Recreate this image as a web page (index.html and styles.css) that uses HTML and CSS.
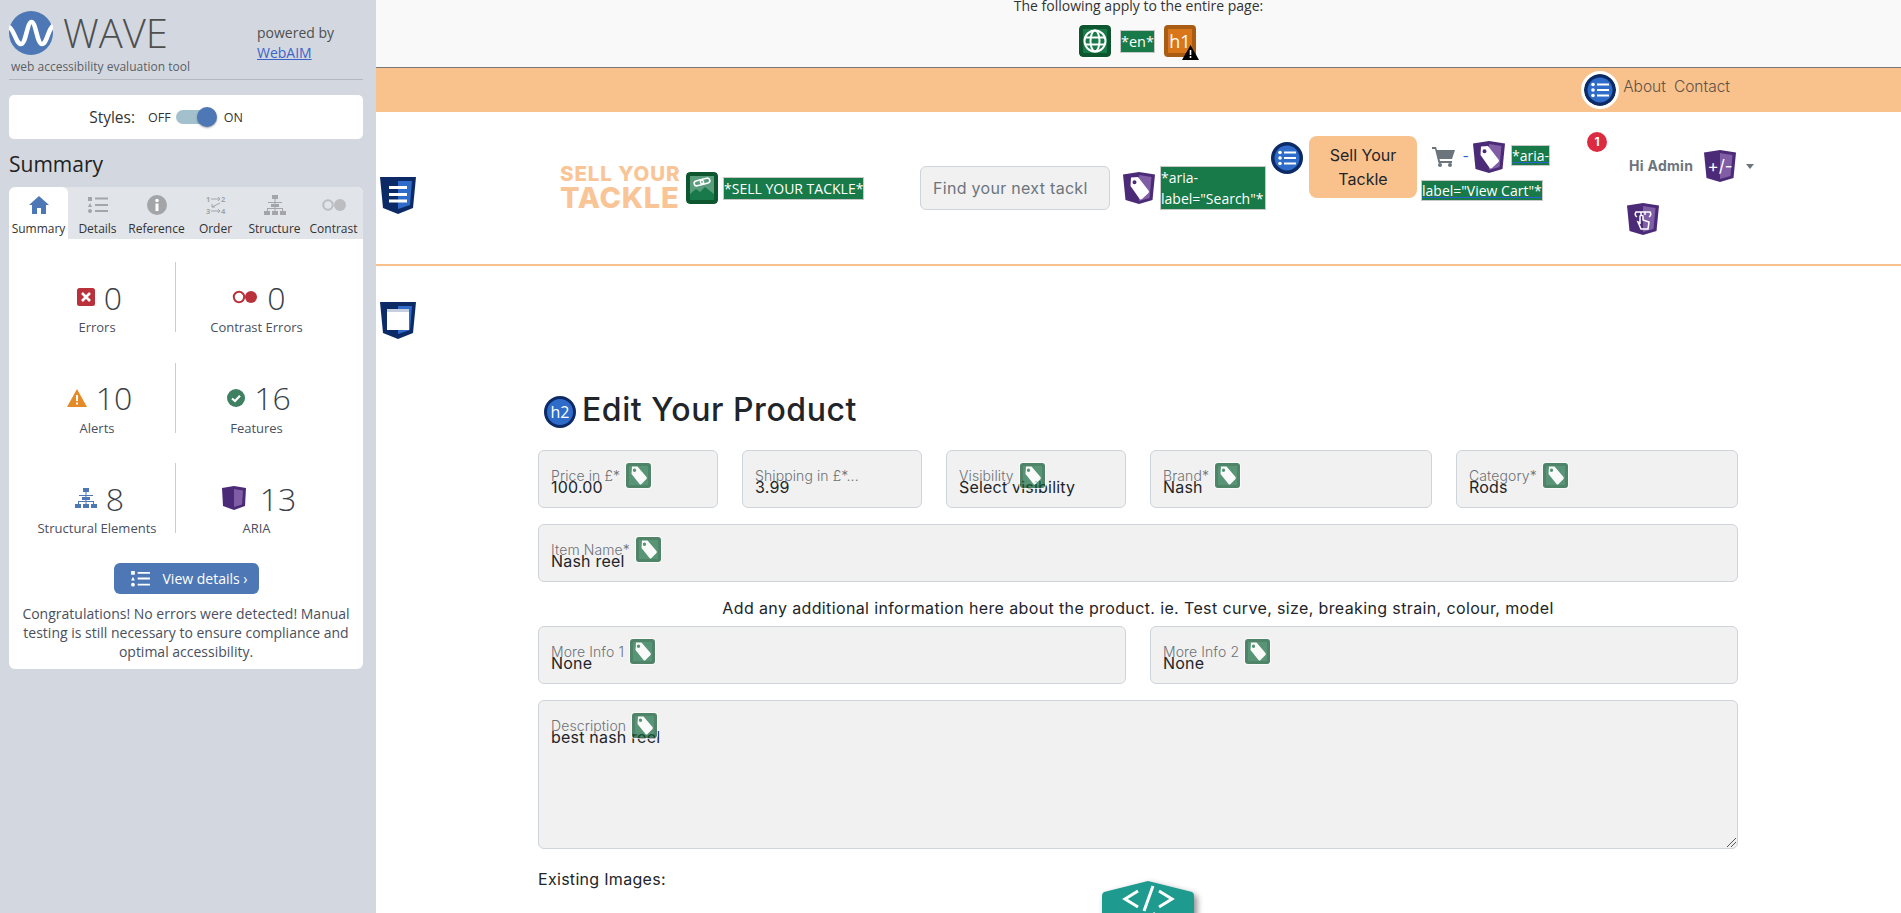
FILE: index.html
```html
<!DOCTYPE html>
<html lang="en">
	<head>
		<meta charset="UTF-8" />
		<title>Edit Your Product - WAVE</title>
		<link rel="stylesheet" href="styles.css">
	</head>
	<body>
		<svg class="defs" width="0" height="0">
			<symbol id="tag-glyph" viewBox="0 0 32 32">
				<path fill="#fff" fill-rule="evenodd" d="M8 5.500 15 5 25.500 18.500Q26.500 19.700 25.500 21L19 27Q17.600 28 16.500 26.800L7.500 14ZM11.500 8.300A2 2 0 1 0 11.500 12.300A2 2 0 1 0 11.500 8.300Z"/>
			</symbol>
			<symbol id="shield-purple" viewBox="0 0 32 32">
				<path fill="#4b2a78" d="M0 2.500 16 0 32 2.500 29.500 28 16 32 2.500 28Z"/>
				<path fill="#7f5ea6" d="M16 3 28.500 5 26.500 26 16 29Z"/>
			</symbol>
			<symbol id="shield-blue" viewBox="0 0 36 37">
				<path fill="#0b2a66" d="M0 0H36L33 31 18 37 3 31Z"/>
				<path fill="#2f6cc9" d="M18 4H32L30 28 18 32Z"/>
			</symbol>
			<symbol id="list-circle" viewBox="0 0 32 32">
				<circle cx="16" cy="16" r="16" fill="#0b2a66"/>
				<circle cx="16" cy="16" r="12.500" fill="#2f6cc9"/>
				<path fill="#fff" d="M13 9.500H25V11.500H13ZM13 15H25V17H13ZM13 20.500H25V22.500H13Z"/>
				<circle cx="9" cy="10.500" r="1.800" fill="#fff"/>
				<circle cx="9" cy="16" r="1.800" fill="#fff"/>
				<circle cx="9" cy="21.500" r="1.800" fill="#fff"/>
			</symbol>
			<symbol id="tree" viewBox="0 0 22 20">
				<path fill="currentColor" d="M8 0H14V4H11.500V7H18V8H11.500V9H15V12H11.500V13H19V16H22V20H16V16H18V14H11.500V16H14V20H8V16H10.500V14H4V16H6V20H0V16H3V13H10.500V12H7V9H10.500V8H4V7H10.500V4H8Z"/>
			</symbol>
			<symbol id="green-tag" viewBox="0 0 27 27">
				<rect width="27" height="27" rx="4" fill="#fff"/>
				<rect x="1" y="1" width="25" height="25" rx="3" fill="#0d5630"/>
				<rect x="4" y="4" width="19" height="19" fill="#166f43"/>
				<path fill="#fff" fill-rule="evenodd" d="M7 4.500 12.500 4.500 21.500 15Q22.300 16 21.500 17L16.500 22Q15.500 23 14.500 22L6.500 12ZM9.500 6.500A1.700 1.700 0 1 0 9.500 9.900A1.700 1.700 0 1 0 9.500 6.500Z"/>
			</symbol>
		</svg>

		<aside class="wave">
			<div class="wave-head">
				<div class="wave-brand">
					<div class="wave-logo">
						<svg width="44" height="44" viewBox="0 0 44 44">
							<circle cx="22" cy="22" r="22" fill="#4d78b5"/>
							<path fill="none" stroke="#fff" stroke-width="4.500" d="M0 16C5 18 7 33 12 33S18 11 22.500 11 28 33 33 33 39 18 44 15"/>
						</svg>
						<span class="wave-name">WAVE</span>
					</div>
					<div class="wave-sub">web accessibility evaluation tool</div>
				</div>
				<div class="wave-powered">powered by<br><a href="#">WebAIM</a></div>
			</div>

			<div class="styles-card">
				<span class="styles-name">Styles:</span>
				<span class="styles-opt">OFF</span>
				<span class="toggle"><span class="toggle-knob"></span></span>
				<span class="styles-opt">ON</span>
			</div>

			<h2 class="wave-title">Summary</h2>

			<div class="panel">
				<div class="tabs">
					<div class="tab tab-active">
						<svg width="20" height="18" viewBox="0 0 20 18"><path fill="#4d78b5" d="M10 0 20 9H17V18H12V12H8V18H3V9H0Z"/></svg>
						<span>Summary</span>
					</div>
					<div class="tab">
						<svg width="20" height="18" viewBox="0 0 20 18"><path fill="#a3a5a8" d="M0 1H4V5H0ZM7 1.500H20V3.500H7ZM2 7 4 11H0ZM7 8H20V10H7ZM7 14H20V16H7Z"/><circle cx="2" cy="15" r="2" fill="#a3a5a8"/></svg>
						<span>Details</span>
					</div>
					<div class="tab">
						<svg width="20" height="20" viewBox="0 0 20 20"><circle cx="10" cy="10" r="10" fill="#a3a5a8"/><path fill="#fff" d="M8.500 8.500H11.500V16H8.500Z"/><circle cx="10" cy="5.500" r="1.800" fill="#fff"/></svg>
						<span>Reference</span>
					</div>
					<div class="tab">
						<svg width="20" height="20" viewBox="0 0 20 20">
							<text class="order-num" x="0" y="7">1</text>
							<text class="order-num" x="15" y="7">2</text>
							<text class="order-num" x="0" y="19">3</text>
							<text class="order-num" x="15" y="19">4</text>
							<path fill="none" stroke="#a3a5a8" d="M5 4H14M12 2 14 4 12 6M14 8 6 12M6 9V12H9M5 16H14M12 14 14 16 12 18"/>
						</svg>
						<span>Order</span>
					</div>
					<div class="tab">
						<svg class="tab-tree" width="22" height="20"><use href="#tree"/></svg>
						<span>Structure</span>
					</div>
					<div class="tab">
						<svg width="26" height="20" viewBox="0 0 26 20"><circle cx="7" cy="10" r="4.800" fill="none" stroke="#bbbdc0" stroke-width="2"/><circle cx="19" cy="10" r="6" fill="#bbbdc0"/></svg>
						<span>Contrast</span>
					</div>
				</div>

				<div class="stats">
					<div class="stat">
						<div class="stat-num">
							<svg width="18" height="18" viewBox="0 0 18 18"><rect width="18" height="18" rx="2.500" fill="#b9313b"/><path stroke="#fff" stroke-width="2.600" d="M5 5 13 13M13 5 5 13"/></svg>
							<span>0</span>
						</div>
						<div class="stat-label">Errors</div>
					</div>
					<div class="stat stat-right">
						<div class="stat-num">
							<svg width="26" height="14" viewBox="0 0 26 14"><circle cx="7" cy="7" r="5.200" fill="none" stroke="#b9313b" stroke-width="2"/><circle cx="19" cy="7" r="6" fill="#b9313b"/></svg>
							<span>0</span>
						</div>
						<div class="stat-label">Contrast Errors</div>
					</div>
					<div class="stat">
						<div class="stat-num">
							<svg width="20" height="18" viewBox="0 0 20 18"><path fill="#e48a27" d="M10 0 20 18H0Z"/><path fill="#fff" d="M9 6H11V12H9ZM9 13.500H11V15.500H9Z"/></svg>
							<span>10</span>
						</div>
						<div class="stat-label">Alerts</div>
					</div>
					<div class="stat stat-right">
						<div class="stat-num">
							<svg width="18" height="18" viewBox="0 0 18 18"><circle cx="9" cy="9" r="9" fill="#3f7f62"/><path fill="none" stroke="#fff" stroke-width="2.200" d="M5 9.500 8 12 13 6.800"/></svg>
							<span>16</span>
						</div>
						<div class="stat-label">Features</div>
					</div>
					<div class="stat">
						<div class="stat-num">
							<svg class="stat-tree" width="22" height="20"><use href="#tree"/></svg>
							<span>8</span>
						</div>
						<div class="stat-label">Structural Elements</div>
					</div>
					<div class="stat stat-right">
						<div class="stat-num stat-aria">
							<svg width="24" height="24" viewBox="0 0 24 24"><path fill="#4b2a78" d="M0 2 12 0 24 2 23 20 12 24 1 20Z"/><path fill="#7f5ea6" d="M12 3 21 4.500 20 18.500 12 21Z"/></svg>
							<span>13</span>
						</div>
						<div class="stat-label">ARIA</div>
					</div>
				</div>

				<div class="details-wrap">
					<a class="details-btn" href="#">
						<svg width="19" height="16" viewBox="0 0 20 17"><path fill="#fff" d="M0 0H4V4H0ZM7 1H20V3H7ZM2 6 4 10H0ZM7 7H20V9H7ZM7 13.500H20V15.500H7Z"/><circle cx="2" cy="14.500" r="2" fill="#fff"/></svg>
						View details ›
					</a>
				</div>
				<p class="congrats">Congratulations! No errors were detected! Manual testing is still necessary to ensure compliance and optimal accessibility.</p>
			</div>
		</aside>

		<main class="page">
			<div class="page-info">
				<div class="page-info-text">The following apply to the entire page:</div>
				<div class="page-info-icons">
					<svg class="halo-sq" width="32" height="32" viewBox="0 0 32 32">
						<rect width="32" height="32" rx="4" fill="#0d5630"/>
						<rect x="4" y="4" width="24" height="24" fill="#177a48"/>
						<g fill="none" stroke="#fff" stroke-width="2">
							<circle cx="16" cy="16" r="10.500"/>
							<ellipse cx="16" cy="16" rx="4.500" ry="10.500"/>
							<path d="M6 12.500H26M6 19.500H26"/>
						</g>
					</svg>
					<span class="wave-text wave-lang">*en*</span>
					<div class="h1-icon">
						h1
						<svg class="h1-alert" width="17" height="15" viewBox="0 0 17 15"><path d="M8.500 0 17 15H0Z"/><path fill="#fff" d="M7.700 5H9.300V10H7.700ZM7.700 11H9.300V13H7.700Z"/></svg>
					</div>
				</div>
			</div>

			<nav class="topbar">
				<svg class="halo-round" width="32" height="32"><use href="#list-circle"/></svg>
				<a href="#">About</a>
				<a href="#">Contact</a>
			</nav>

			<header class="site-head">
				<svg class="struct-icon" width="36" height="37">
					<use href="#shield-blue"/>
					<path fill="#fff" d="M9 9H27V12H9ZM9 16H27V19H9ZM9 22.500H27V25.500H9Z"/>
				</svg>

				<div class="brand">
					<div class="logo">
						<span class="logo-top">SELL YOUR</span>
						<span class="logo-bottom">TACKLE</span>
					</div>
					<svg class="halo-sq" width="32" height="32" viewBox="0 0 32 32">
						<rect width="32" height="32" rx="4" fill="#0d5630"/>
						<rect x="4" y="4" width="24" height="24" fill="#5a9d7c"/>
						<path fill="#177a48" d="M4 22 10 17 14 20 19 15 28 22V28H4Z"/>
						<g fill="none" stroke="#fff" stroke-width="1.600" transform="rotate(-14 16 10)">
							<rect x="8" y="7.500" width="9.500" height="5" rx="2.500"/>
							<rect x="14.500" y="7.500" width="9.500" height="5" rx="2.500"/>
						</g>
					</svg>
					<span class="wave-text">*SELL YOUR TACKLE*</span>
				</div>

				<input class="search" type="text" placeholder="Find your next tackle">
				<svg class="search-tag" width="32" height="32"><use href="#shield-purple"/><use href="#tag-glyph"/></svg>
				<span class="wave-text search-label">*aria-<br>label="Search"*</span>
				<svg class="head-list" width="32" height="32"><use href="#list-circle"/></svg>
				<a class="sell-btn" href="#">Sell Your Tackle</a>

				<div class="cart">
					<svg class="cart-icon" width="23" height="20" viewBox="0 0 23 20">
						<path fill="#6c757d" d="M0 0H4L5 3H23L20 12H7.500L8 14H20V16H6.500L3 2H0Z"/>
						<circle cx="8" cy="18" r="2" fill="#6c757d"/>
						<circle cx="18" cy="18" r="2" fill="#6c757d"/>
					</svg>
					<span class="cart-dash">-</span>
					<svg class="cart-tag" width="32" height="32"><use href="#shield-purple"/><use href="#tag-glyph"/></svg>
					<span class="wave-text cart-label">*aria-<br>label="View Cart"*</span>
				</div>

				<span class="badge">1</span>

				<div class="user">
					<div class="user-row">
						<span class="user-name">Hi Admin</span>
						<div class="plus-icon">
							<svg width="32" height="32"><use href="#shield-purple"/></svg>
							<span>+/-</span>
						</div>
						<span class="caret"></span>
					</div>
					<svg class="touch-icon" width="32" height="32">
						<use href="#shield-purple"/>
						<path fill="none" stroke="#fff" stroke-width="1.500" d="M10 14Q7 12 9 9H23Q25 12 22 14M14 9V12M18 9V12M13 13V20L11 19 14 26H21L22 19 16 17V13Q14.500 11.500 13 13Z"/>
					</svg>
				</div>
			</header>

			<section class="content">
				<svg class="struct-icon-2" width="36" height="37">
					<use href="#shield-blue"/>
					<rect x="7" y="7" width="22" height="3" fill="#c5cfdf"/>
					<rect x="7" y="10" width="22" height="18" fill="#fff"/>
				</svg>

				<div class="form">
					<h2 class="form-title">
						<span class="h2-icon">h2</span>
						Edit Your Product
					</h2>

					<div class="form-row">
						<div class="field col-2">
							<div class="field-label">Price in £*<svg class="label-tag" width="27" height="27"><use href="#green-tag"/></svg></div>
							<div class="field-value">100.00</div>
						</div>
						<div class="field col-2">
							<div class="field-label">Shipping in £*...</div>
							<div class="field-value">3.99</div>
						</div>
						<div class="field col-2">
							<div class="field-label">Visibility<svg class="label-tag" width="27" height="27"><use href="#green-tag"/></svg></div>
							<div class="field-value">Select visibility</div>
						</div>
						<div class="field col-3">
							<div class="field-label">Brand*<svg class="label-tag" width="27" height="27"><use href="#green-tag"/></svg></div>
							<div class="field-value">Nash</div>
						</div>
						<div class="field col-3">
							<div class="field-label">Category*<svg class="label-tag" width="27" height="27"><use href="#green-tag"/></svg></div>
							<div class="field-value">Rods</div>
						</div>
					</div>

					<div class="form-row">
						<div class="field col-12">
							<div class="field-label">Item Name*<svg class="label-tag" width="27" height="27"><use href="#green-tag"/></svg></div>
							<div class="field-value">Nash reel</div>
						</div>
					</div>

					<p class="form-note">Add any additional information here about the product. ie. Test curve, size, breaking strain, colour, model</p>

					<div class="form-row">
						<div class="field col-6">
							<div class="field-label">More Info 1<svg class="label-tag" width="27" height="27"><use href="#green-tag"/></svg></div>
							<div class="field-value">None</div>
						</div>
						<div class="field col-6">
							<div class="field-label">More Info 2<svg class="label-tag" width="27" height="27"><use href="#green-tag"/></svg></div>
							<div class="field-value">None</div>
						</div>
					</div>

					<div class="form-row">
						<div class="field col-12 field-area">
							<div class="field-label">Description<svg class="label-tag" width="27" height="27"><use href="#green-tag"/></svg></div>
							<div class="field-value">best nash reel</div>
							<svg class="resizer" width="10" height="10" viewBox="0 0 10 10"><path stroke="#555" d="M10 1 1 10M10 5 5 10"/></svg>
						</div>
					</div>

					<p class="images-title">Existing Images:</p>
				</div>
			</section>

			<svg class="code-toggle" width="104" height="40" viewBox="0 0 104 40">
				<path fill="#1f9a8f" d="M46 0 90 11Q92 12 92 15V40H0V15Q0 12 2 11Z"/>
				<path fill="none" stroke="#fff" stroke-width="3" d="M36 10 23 18 36 26M57 10 70 18 57 26M51 5 42 30"/>
				<text class="code-text" x="46" y="41">Code</text>
			</svg>
		</main>
	</body>
</html>
```

FILE: styles.css
```css
* {
	box-sizing: border-box;
}
html,
body {
	height: 100%;
}
body {
	margin: 0;
	display: flex;
	overflow: hidden;
	background: #fff;
	font-family: Inter, "Noto Sans", sans-serif;
}
.defs {
	position: absolute;
}
svg {
	display: block;
	flex-shrink: 0;
}

/* sidebar */
.wave {
	width: 376px;
	flex-shrink: 0;
	padding: 11px 13px 0 9px;
	background: #d3d8e0;
	font-family: "Open Sans", sans-serif;
	color: #333;
}
.wave-head {
	display: flex;
	height: 69px;
	border-bottom: 1px solid #b4b9c1;
}
.wave-brand {
	width: 248px;
}
.wave-logo {
	display: flex;
	align-items: center;
	gap: 10px;
	height: 44px;
}
.wave-name {
	font-size: 40px;
	font-weight: 300;
	line-height: 44px;
	color: #4f4f4f;
}
.wave-sub {
	margin: 3px 0 0 2px;
	font-size: 12px;
	line-height: 18px;
	color: #5b5f66;
}
.wave-powered {
	margin-top: 12px;
	font-size: 14px;
	line-height: 20px;
	color: #4f4f4f;
}
.wave-powered a {
	color: #3d63c7;
}
.styles-card {
	display: flex;
	align-items: center;
	justify-content: center;
	height: 44px;
	margin-top: 15px;
	padding-right: 40px;
	background: #fff;
	border-radius: 5px;
}
.styles-name {
	margin-right: 13px;
	font-size: 15.500px;
}
.styles-opt {
	font-size: 12.500px;
}
.toggle {
	position: relative;
	width: 40px;
	height: 14px;
	margin: 0 8px 0 5px;
	background: #a3c1cc;
	border-radius: 7px;
}
.toggle-knob {
	position: absolute;
	top: -3px;
	right: -1px;
	width: 20px;
	height: 20px;
	background: #4d78b5;
	border-radius: 50%;
	box-shadow: 0 1px 2px rgba(0, 0, 0, 0.35);
}
.wave-title {
	margin: 10px 0 8px;
	font-size: 21px;
	font-weight: 400;
	line-height: 30px;
	color: #222;
}
.panel {
	height: 482px;
	background: #fff;
	border-radius: 6px;
	overflow: hidden;
}
.tabs {
	display: flex;
	height: 52px;
	background: #e1e4e9;
}
.tab {
	display: flex;
	flex-direction: column;
	align-items: center;
	width: 59px;
	padding-top: 8px;
	font-size: 12px;
	color: #333;
}
.tab svg {
	height: 20px;
}
.tab span {
	margin-top: 5px;
	line-height: 18px;
	white-space: nowrap;
}
.tab-active {
	background: #fff;
	border-radius: 6px 6px 0 0;
}
.tab-tree {
	color: #a3a5a8;
}
.order-num {
	font-size: 7.500px;
	font-weight: 700;
	fill: #a3a5a8;
}
.stats {
	display: grid;
	grid-template-columns: 156px 162px;
	grid-auto-rows: 70px;
	row-gap: 30.500px;
	padding: 23px 0 0 10px;
}
.stat {
	padding-top: 17px;
	text-align: center;
}
.stat-right {
	border-left: 1px solid #ccc;
}
.stat-num {
	display: flex;
	align-items: center;
	justify-content: center;
	gap: 9px;
	height: 36px;
	padding-left: 5px;
	font-size: 32px;
	font-weight: 300;
	color: #3a3f4a;
}
.stat-aria {
	gap: 14px;
}
.stat-tree {
	color: #4d78b5;
}
.stat-label {
	margin-top: 3px;
	font-size: 13px;
	line-height: 18px;
	color: #4a4f5e;
}
.details-wrap {
	display: flex;
	justify-content: center;
	margin-top: 30px;
}
.details-btn {
	display: flex;
	align-items: center;
	gap: 13px;
	width: 145px;
	height: 31px;
	padding-left: 17px;
	background: #4d78b5;
	border-radius: 6px;
	font-size: 14px;
	color: #fff;
	text-decoration: none;
}
.congrats {
	margin: 10px 4px 0;
	font-size: 14px;
	line-height: 19px;
	text-align: center;
	color: #4a4f5e;
}

/* page */
.page {
	position: relative;
	flex: 1;
	min-width: 0;
	height: 913px;
	overflow: hidden;
}
.page-info {
	display: flow-root;
	height: 68px;
	background: #f9f9f9;
	border-bottom: 1px solid #777;
	font-family: "Open Sans", sans-serif;
	text-align: center;
}
.page-info-text {
	margin-top: -4px;
	font-size: 14px;
	line-height: 20px;
	color: #333;
}
.page-info-icons {
	display: flex;
	align-items: center;
	justify-content: center;
	gap: 10px;
	height: 32px;
	margin-top: 9px;
	padding-right: 2px;
}
.wave-text {
	background: #177a48;
	color: #fff;
	font-family: "Open Sans", sans-serif;
	font-size: 14px;
	line-height: 21px;
	outline: 1px solid #c8c8c8;
	white-space: nowrap;
}
.wave-lang {
	font-size: 14.500px;
}
.halo-sq {
	border-radius: 4px;
	box-shadow: 0 0 0 1px #fff;
}
.h1-icon {
	position: relative;
	width: 32px;
	height: 32px;
	background: #d9761a;
	border: 4px solid #a85c14;
	border-radius: 4px;
	color: #fff;
	font-size: 18px;
	line-height: 24px;
	text-align: center;
}
.h1-alert {
	position: absolute;
	top: 16px;
	left: 14px;
}
.topbar {
	display: flex;
	align-items: center;
	justify-content: flex-end;
	gap: 8px;
	height: 44px;
	padding-right: 171px;
	background: #f9c18c;
	font-size: 15.500px;
	font-weight: 300;
	color: #5d5248;
}
.topbar a {
	margin-bottom: 7px;
	color: inherit;
	text-decoration: none;
}
.halo-round {
	box-sizing: content-box;
	margin-right: -4px;
	border: 3px solid #fff;
	border-radius: 50%;
	background: #fff;
}
.site-head {
	display: flex;
	align-items: flex-start;
	height: 154px;
	border-bottom: 2px solid #f9c18c;
}
.struct-icon {
	margin: 65px 0 0 4px;
}
.brand {
	display: flex;
	align-items: center;
	width: 304px;
	margin: 52px 0 0 144px;
}
.logo {
	display: flex;
	flex-direction: column;
	width: 118px;
	margin-right: 8px;
	font-weight: 800;
	color: #f9c596;
}
.logo-top {
	font-size: 20.500px;
	letter-spacing: 0.9px;
	line-height: 20px;
	white-space: nowrap;
}
.logo-bottom {
	font-size: 29px;
	letter-spacing: 0.7px;
	line-height: 28px;
	white-space: nowrap;
}
.brand .wave-text {
	margin-left: 6px;
}
.search {
	width: 190px;
	height: 44px;
	margin: 54px 0 0 56px;
	padding: 0 22px 0 12px;
	background: #f1f1f1;
	border: 1px solid #ced4da;
	border-radius: 6px;
	font-family: Inter, sans-serif;
	font-size: 16px;
	letter-spacing: 0.3px;
}
.search::placeholder {
	color: #6c757d;
}
.search-tag {
	margin: 60px 0 0 13px;
}
.search-label {
	width: 104px;
	margin: 55px 0 0 6px;
}
.head-list {
	margin: 30px 0 0 6px;
}
.sell-btn {
	width: 108px;
	height: 62px;
	margin: 24px 0 0 6px;
	padding: 7px 10px;
	background: #f9c18c;
	border-radius: 8px;
	font-size: 16px;
	line-height: 24px;
	text-align: center;
	color: #212529;
	text-decoration: none;
}
.cart {
	width: 135px;
	margin: 26px 0 0 5px;
	line-height: 35px;
	text-indent: 10px;
}
.cart svg {
	display: inline-block;
	vertical-align: middle;
}
.cart-dash {
	margin: 0 0 0 3px;
	font-size: 14px;
	color: #2a62d0;
}
.cart-label {
	margin-left: 2px;
	text-decoration: underline #2a62d0;
}
.badge {
	width: 20px;
	height: 20px;
	margin: 20px 0 0 30px;
	background: #dc2a41;
	border-radius: 50%;
	font-size: 12px;
	font-weight: 700;
	line-height: 20px;
	text-align: center;
	color: #fff;
}
.user {
	margin: 38px 0 0 22px;
}
.user-row {
	display: flex;
	align-items: center;
}
.user-name {
	width: 75px;
	margin-bottom: 2px;
	font-size: 14px;
	font-weight: 700;
	letter-spacing: 0.3px;
	color: #6c757d;
	white-space: nowrap;
}
.plus-icon {
	position: relative;
	width: 32px;
	height: 32px;
}
.plus-icon span {
	position: absolute;
	inset: 0;
	font-size: 17px;
	line-height: 32px;
	text-align: center;
	color: #fff;
}
.caret {
	margin-left: 10px;
	border-top: 5px solid #6c757d;
	border-left: 4.500px solid transparent;
	border-right: 4.500px solid transparent;
}
.touch-icon {
	margin: 21px 0 0 -2px;
}
.content {
	padding-left: 4px;
}
.struct-icon-2 {
	margin-top: 36px;
}
.form {
	width: 1200px;
	margin: 57px 0 0 158px;
}
.form-title {
	display: flex;
	align-items: flex-start;
	gap: 6px;
	height: 32px;
	margin: 0 0 22px 6px;
	font-size: 32px;
	font-weight: 500;
	letter-spacing: 0.55px;
	line-height: 28px;
	color: #212529;
}
.h2-icon {
	width: 32px;
	height: 32px;
	background: #2f6cc9;
	border: 3px solid #0b2a66;
	border-radius: 50%;
	font-family: "Open Sans", sans-serif;
	font-size: 16px;
	font-weight: 400;
	letter-spacing: 0;
	line-height: 26px;
	text-align: center;
	color: #fff;
}
.form-row {
	display: grid;
	grid-template-columns: repeat(12, 1fr);
	column-gap: 24px;
	margin-bottom: 16px;
}
.field {
	position: relative;
	height: 58px;
	padding: 16px 12px 0;
	background: #f1f1f1;
	border: 1px solid #ced4da;
	border-radius: 6px;
	font-size: 16px;
	letter-spacing: 0.2px;
	color: #212529;
}
.col-2 {
	grid-column: span 2;
}
.col-3 {
	grid-column: span 3;
}
.col-6 {
	grid-column: span 6;
}
.col-12 {
	grid-column: span 12;
}
.field-area {
	height: 149px;
}
.field-label {
	position: relative;
	z-index: 1;
	display: flex;
	align-items: center;
	gap: 5px;
	height: 16px;
	font-size: 14px;
	font-weight: 300;
	letter-spacing: 0.1px;
	color: #6d7176;
	white-space: nowrap;
}
.label-tag {
	opacity: 0.7;
}
.field-value {
	margin-top: -5px;
	line-height: 18px;
}
.resizer {
	position: absolute;
	right: 1px;
	bottom: 1px;
}
.form-note {
	margin: 0 0 8px;
	font-size: 16px;
	letter-spacing: 0.37px;
	line-height: 20px;
	text-align: center;
	color: #212529;
}
.images-title {
	margin: 0;
	padding-top: 4px;
	font-size: 16px;
	letter-spacing: 0.3px;
	line-height: 20px;
	color: #212529;
}
.code-toggle {
	position: absolute;
	top: 881px;
	left: 726px;
	filter: drop-shadow(3px 3px 3px rgba(0, 0, 0, 0.45));
}
.code-text {
	font-family: "Open Sans", sans-serif;
	font-size: 12px;
	fill: #fff;
	text-anchor: middle;
}
```
